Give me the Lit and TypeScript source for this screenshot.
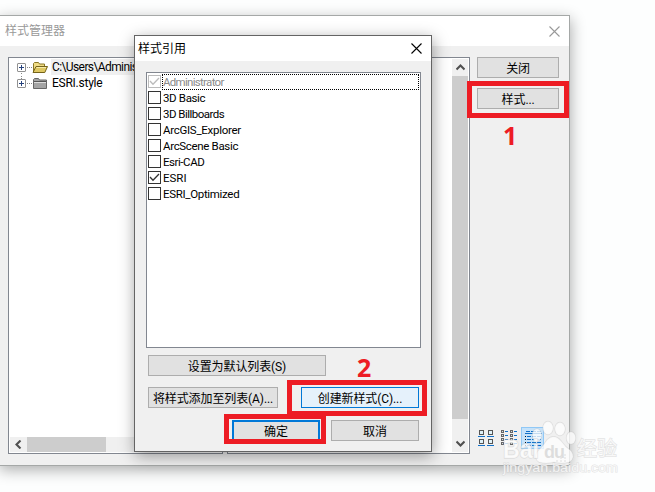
import { LitElement, html, svg, css } from "lit";
import { customElement } from "lit/decorators.js";
import { classMap } from "lit/directives/class-map.js";
import { styleMap } from "lit/directives/style-map.js";

interface StyleItem { name: string; checked?: boolean; disabled?: boolean; spacing: number }

const ITEMS: StyleItem[] = [
  { name: "Administrator", checked: true, disabled: true, spacing: -0.7 },
  { name: "3D Basic", spacing: -0.35 },
  { name: "3D Billboards", spacing: -0.52 },
  { name: "ArcGIS_Explorer", spacing: -0.28 },
  { name: "ArcScene Basic", spacing: -0.33 },
  { name: "Esri-CAD", spacing: -0.45 },
  { name: "ESRI", checked: true, spacing: 0 },
  { name: "ESRI_Optimized", spacing: -0.32 },
];

const closeIcon = html`<svg width="11" height="11" viewBox="0 0 11 11"><path d="M.5 .5L10.5 10.5M10.5 .5L.5 10.5" fill="none" stroke="currentColor" stroke-width="1.1"/></svg>`;

const arrow = (d: string) => html`<svg width="9" height="9" viewBox="0 0 9 9"><path d=${d} fill="none" stroke="#505050" stroke-width="2.1"/></svg>`;

const folder = (open: boolean) => open
  ? html`<svg width="16" height="13" viewBox="0 0 16 13"><path d="M1.500 11V2.500L2.500 1.500H6.500L7.500 3H12.500V5" fill="#f0dc85" stroke="#8a7726"/><path d="M1 11.500L4 5.500H15.500L12.800 11.500Z" fill="#dfc863" stroke="#75631a"/><path d="M4.500 6.500H14" stroke="#f7eba9"/></svg>`
  : html`<svg width="16" height="13" viewBox="0 0 16 13"><path d="M1.500 11.500V2.500L2.500 1.500H6.500L7.500 3H14.500V11.500Z" fill="#a4a4a4" stroke="#666"/><path d="M2 4.500H14" stroke="#555"/><path d="M2 5.500H14" stroke="#ddd"/></svg>`;

const expander = (first: boolean) => html`<svg width="16" height="16" viewBox="0 0 16 16"><rect x="1.500" y="4.500" width="8" height="8" rx=".5" fill="#fff" stroke="#919191"/><path d="M3 8.500H8M5.500 6V11" stroke="#25417c"/><path d="M11 8.500H16" stroke="#888" stroke-dasharray="1 1"/><path d=${first ? "M5.500 14v2" : "M5.500 1v3"} stroke="#888" stroke-dasharray="1 1"/></svg>`;

const largeIcons = html`<svg width="18" height="18" viewBox="0 0 18 18">${[1, 10].map(x => [1, 10].map(y => svg`<rect x=${x + 1.5} y=${y + .5} width="4" height="4" fill="#dff1f8" stroke="#555"/><path d=${`M${x} ${y + 6.5}h7`} stroke="#1170c8"/>`))}</svg>`;

const smallIcons = html`<svg width="18" height="18" viewBox="0 0 18 18">${[1, 10].map(x => [1, 5, 9, 13].map(y => svg`<rect x=${x + .5} y=${y + .5} width="2" height="2" fill="#ddd" stroke="#666"/><path d=${`M${x + 4} ${y + 1.5}h3`} stroke="#1170c8"/>`))}</svg>`;

const detailIcon = html`<svg width="17" height="17" viewBox="0 0 17 17"><path d="M1 1.500h4M6 1.500h5M12 1.500h4M0 3.500H17" stroke="#1170c8"/>${[6, 9, 12, 15].map(y => svg`<path d=${`M0 ${y + .5}h1`} stroke="#111"/><path d=${`M2 ${y + .5}h4M7 ${y + .5}h4M12 ${y + .5}h4`} stroke="#1170c8"/>`)}</svg>`;

@customElement("app-root")
export class AppRoot extends LitElement {
  static styles = css`
    * { box-sizing: border-box; }
    :host { display: block; position: relative; width: 655px; height: 492px; overflow: hidden; background: #fdfefe; font: 12px/16px "Roboto", "Noto Sans CJK SC", sans-serif; color: #000; }
    svg { display: block; flex: none; }
    .manager { position: absolute; left: -2px; top: 15px; width: 572px; height: 451px; border: 1px solid #a5a8a7; background: #f0f0f0; display: flex; flex-direction: column; box-shadow: 1px 4px 14px rgba(0,0,0,.32); }
    .title { height: 30px; flex: none; background: #fff; display: flex; align-items: center; justify-content: space-between; padding: 0 9px 0 6px; color: #999; }
    .content { display: flex; flex: 1; padding: 11px 10px 11px 9px; }
    .pane { border: 1px solid #828790; background: #fff; padding: 1px; }
    .tree { width: 215px; display: flex; flex-direction: column; }
    .node { height: 16px; display: flex; align-items: center; margin-left: 6px; white-space: nowrap; }
    .node span { margin-left: 3px; padding: 0 1px; letter-spacing: -.25px; }
    .node .selected { background: #f0f0f0; letter-spacing: -.6px; }
    .nodes { flex: 1; }
    .hscroll { height: 15px; background: #f0f0f0; display: flex; }
    .end { width: 17px; display: grid; place-items: center; }
    .hthumb { width: 79px; background: #cdcdcd; }
    .preview { width: 244px; margin-left: 4px; display: flex; justify-content: flex-end; }
    .vscroll { width: 16px; background: #f0f0f0; display: flex; flex-direction: column; }
    .vend { height: 17px; display: grid; place-items: center; }
    .vthumb { height: 343px; background: #cdcdcd; }
    .fill { flex: 1; }
    .side { width: 82px; margin-left: 7px; display: flex; flex-direction: column; gap: 10px; }
    .btn { height: 21px; border: 1px solid #adadad; background: #e1e1e1; display: flex; align-items: center; justify-content: center; white-space: nowrap; padding-top: 3px; letter-spacing: -.1px; }
    .views { margin-top: auto; margin-bottom: 5px; display: flex; align-items: center; gap: 5px; height: 22px; }
    .view-selected { border: 1px solid #90c8f6; background: #c5e2fa; height: 22px; width: 23px; display: flex; padding: 2px 0 0 3px; margin-left: -2px; }
    .dialog { position: absolute; left: 134px; top: 35px; width: 298px; height: 417px; border: 1px solid #646464; background: #f0f0f0; box-shadow: 1px 4px 15px rgba(0,0,0,.38); }
    .dialog .title { height: 25px; color: #000; padding: 0 9px 0 3px; }
    .list { margin: 11px 10px 0 11px; height: 276px; padding: 1px; }
    .row { height: 16px; display: flex; align-items: flex-start; }
    .check { width: 13px; height: 13px; margin-top: 1px; border: 1px solid #333; background: #fff; color: #333; }
    .name { flex: 1; height: 16px; line-height: 16px; margin-left: 1px; padding-left: 1px; font-size: 11.5px; }
    .disabled { color: #8a8a8a; }
    .disabled .check { border-color: #bbb; color: #bbb; }
    .disabled .name { border: 1px dotted #000; line-height: 14px; padding-left: 0; }
    .actions { display: grid; grid-template-columns: 130px 118px; justify-content: space-between; row-gap: 11px; padding: 7px 12px 0 13px; }
    .default { width: 178px; grid-column: 1 / 3; }
    .hot { border-color: #0078d7; background: #e5f1fb; }
    .confirm { grid-column: 1 / 3; display: flex; justify-content: flex-end; gap: 11px; margin-top: 1px; }
    .confirm .btn { width: 88px; }
    .confirm .primary { border: 2px solid #0078d7; }
    .mark { position: absolute; border: 5px solid #ed1c24; }
    .m1 { left: 467px; top: 81px; width: 102px; height: 37px; }
    .m2 { left: 287px; top: 380px; width: 140px; height: 36px; }
    .m3 { left: 224px; top: 414px; width: 102px; height: 30px; }
    .digit { position: absolute; color: #ed1c24; font: bold 25px/28px "Noto Sans", sans-serif; }
    .d1 { left: 503px; top: 121px; }
    .d2 { left: 357px; top: 353px; }
    .watermark { position: absolute; left: 500px; top: 415px; }
    .grip { position: absolute; left: 555px; top: 454px; }
  `;

  render() {
    return html`
      <div class="manager">
        <div class="title"><span>样式管理器</span>${closeIcon}</div>
        <div class="content">
          <div class="pane tree">
            <div class="nodes">
              <div class="node">${expander(true)}${folder(true)}<span class="selected">C:\\Users\\Administrator</span></div>
              <div class="node">${expander(false)}${folder(false)}<span>ESRI.style</span></div>
            </div>
            <div class="hscroll"><div class="end">${arrow("M6.500 .5L2.500 4.500L6.500 8.500")}</div><div class="hthumb"></div></div>
          </div>
          <div class="pane preview"><div class="vscroll">
            <div class="vend">${arrow("M.5 6.500L4.500 2.500L8.500 6.500")}</div><div class="vthumb"></div><div class="fill"></div><div class="vend">${arrow("M.5 2.500L4.500 6.500L8.500 2.500")}</div>
          </div></div>
          <div class="side">
            <div class="btn">关闭</div><div class="btn">样式...</div>
            <div class="views">${largeIcons}${smallIcons}<div class="view-selected">${detailIcon}</div></div>
          </div>
        </div>
      </div>
      <div class="dialog">
        <div class="title"><span>样式引用</span>${closeIcon}</div>
        <div class="pane list">${ITEMS.map(item => html`
          <div class=${classMap({ row: true, disabled: !!item.disabled })}>
            <div class="check">${item.checked ? html`<svg width="11" height="11" viewBox="0 0 11 11"><path d="M1 5L4 8.300L10 2" fill="none" stroke="currentColor" stroke-width="1.300"/></svg>` : ""}</div>
            <div class="name" style=${styleMap({ letterSpacing: `${item.spacing}px` })}>${item.name}</div>
          </div>`)}
        </div>
        <div class="actions">
          <div class="btn default">设置为默认列表(S)</div>
          <div class="btn">将样式添加至列表(A)...</div><div class="btn hot">创建新样式(C)...</div>
          <div class="confirm"><div class="btn primary">确定</div><div class="btn">取消</div></div>
        </div>
      </div>
      <div class="mark m1"></div><div class="mark m2"></div><div class="mark m3"></div>
      <div class="digit d1">1</div><div class="digit d2">2</div>
      <svg class="grip" width="12" height="10" viewBox="0 0 12 10" fill="#b5b5b5"><path d="M9 0h2v2h-2zM5 3h2v2h-2zM9 3h2v2h-2zM1 6h2v2h-2zM5 6h2v2h-2zM9 6h2v2h-2z"/></svg>
      <svg class="watermark" width="125" height="65" viewBox="0 0 125 65" fill="#fff" fill-opacity=".75" stroke="#c9c9c9" stroke-opacity=".5" stroke-width="1.300" paint-order="stroke">
        <ellipse cx="37" cy="20" rx="4.500" ry="6"/><ellipse cx="48" cy="13" rx="5" ry="6.500"/><ellipse cx="60" cy="14" rx="5" ry="6.500"/><ellipse cx="71" cy="23" rx="4.500" ry="6"/>
        <path d="M47 25Q54 18 61 26Q65 32 71 36Q76 43 69 47Q62 49 54 47Q46 49 39 47Q33 43 38 36Q43 32 47 25Z"/>
        <text x="3" y="43" font-family="Liberation Sans" font-size="25" font-weight="bold" textLength="36" lengthAdjust="spacingAndGlyphs">Bai</text>
        <text x="44" y="43" font-family="Liberation Sans" font-size="18" font-weight="bold" fill="#d4d4d4" stroke="none" textLength="21">du</text>
        <text x="77" y="41" font-family="Noto Sans CJK SC" font-size="20" textLength="40">经验</text>
        <text x="3" y="57" font-family="Liberation Sans" font-size="12.500" stroke-width="1" textLength="115" lengthAdjust="spacingAndGlyphs">jingyan.baidu.com</text>
      </svg>`;
  }
}
